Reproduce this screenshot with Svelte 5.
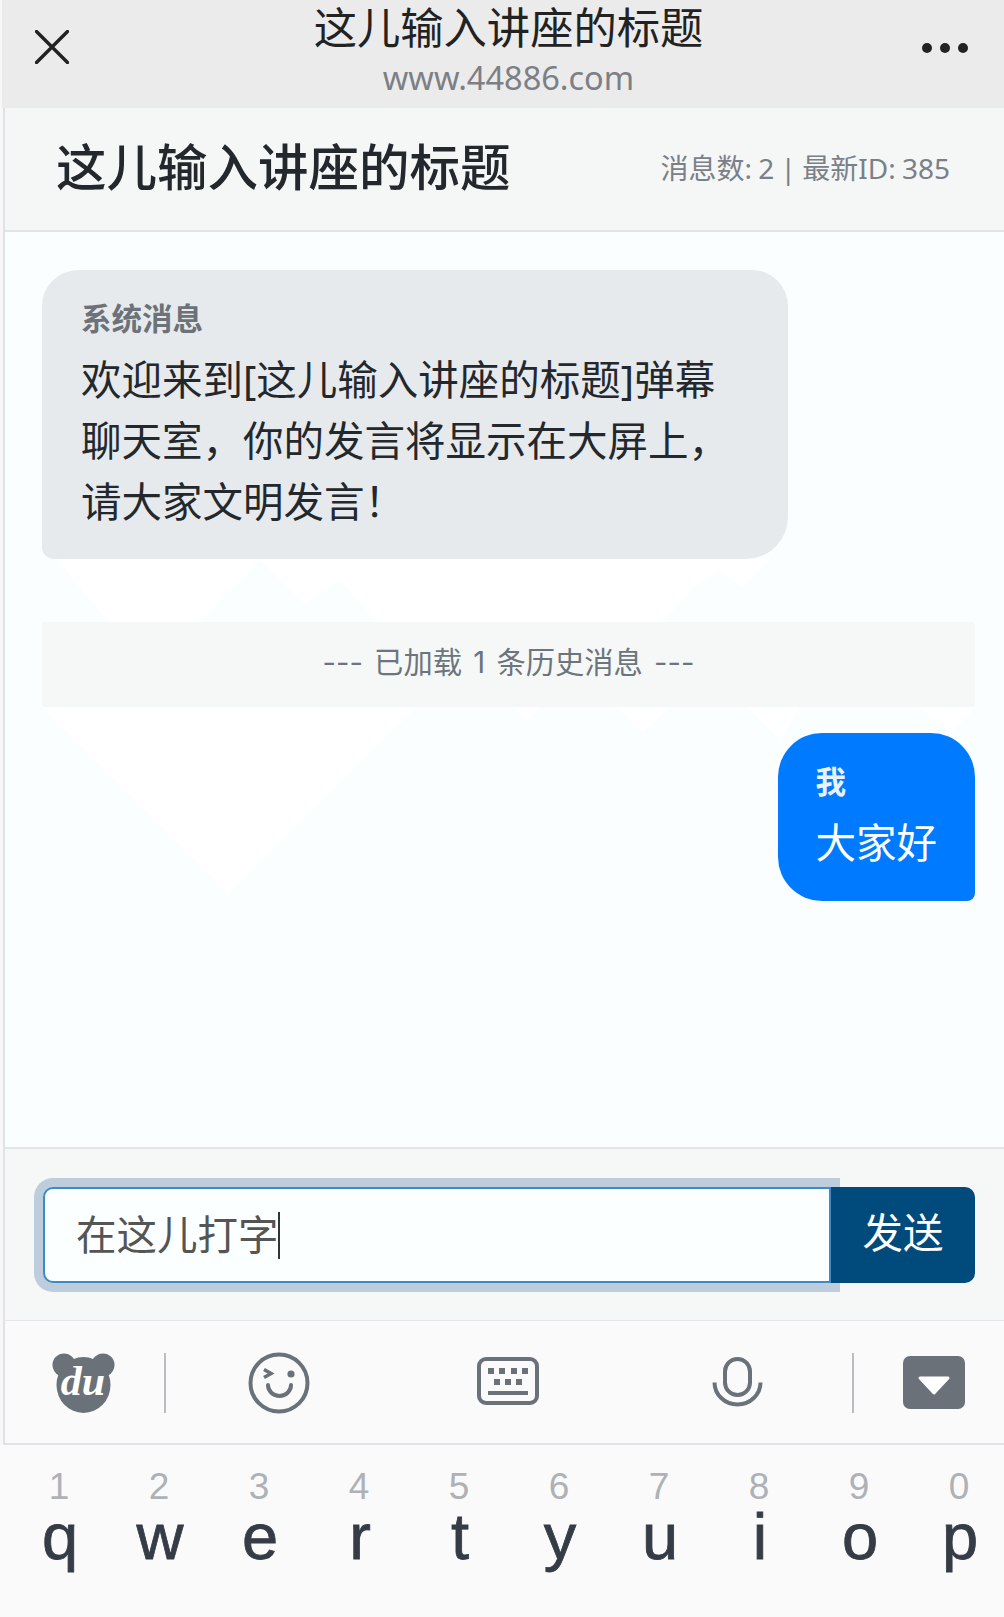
<script>
  const keys = [['1','q'],['2','w'],['3','e'],['4','r'],['5','t'],['6','y'],['7','u'],['8','i'],['9','o'],['0','p']];
</script>

<div class="screen">
  <div class="topbar">
    <svg class="close" viewBox="0 0 34 34" width="34" height="34"><path d="M1.5 1.5 32.5 32.5M32.5 1.5 1.5 32.5" fill="none" stroke="#222" stroke-width="3.4" stroke-linecap="round"/></svg>
    <div class="topcenter">
      <div class="toptitle">这儿输入讲座的标题</div>
      <div class="url">www.44886.com</div>
    </div>
    <div class="dots"><i></i><i></i><i></i></div>
  </div>

  <div class="panel">
    <div class="header">
      <div class="title">这儿输入讲座的标题</div>
      <div class="meta">消息数: 2 | 最新ID: 385</div>
    </div>

    <div class="messages">
      <svg class="pattern" viewBox="5 232 999 913" width="999" height="913" aria-hidden="true">
        <polygon points="57,559 108,622 200,622 230,588 235,588 260,560 305,604 340,580 377,622 663,622 692,588 720,570 742,587 770,559" fill="#fff"/>
        <polygon points="42,707 228,893 416,707" fill="#fff"/>
        <polygon points="513,707 527,720 540,707" fill="#fff"/>
        <polygon points="617,707 643,732 670,707" fill="#fff"/>
        <polygon points="747,707 780,740 800,707" fill="#fff"/>
        <polygon points="950,733 976,707 920,707" fill="#fff"/>
      </svg>
      <div class="bubble system">
        <div class="who">系统消息</div>
        <div class="text">欢迎来到[这儿输入讲座的标题]弹幕聊天室，你的发言将显示在大屏上，请大家文明发言！</div>
      </div>
      <div class="notice">--- 已加载 1 条历史消息 ---</div>
      <div class="bubble mine">
        <div class="who">我</div>
        <div class="text">大家好</div>
      </div>
    </div>

    <div class="inputbar">
      <div class="inputbox"><span class="typed">在这儿打字</span><i class="caret"></i></div>
      <div class="send">发送</div>
    </div>

    <div class="toolbar">
      <svg class="bear" viewBox="0 0 63 60" width="63" height="60">
        <circle cx="12" cy="12" r="11.5" fill="#6b7178"/>
        <circle cx="51" cy="12" r="11.5" fill="#6b7178"/>
        <ellipse cx="31.5" cy="32" rx="27" ry="28" fill="#6b7178"/>
        <text x="31" y="42" text-anchor="middle" class="du">du</text>
      </svg>
      <i class="sep first"></i>
      <svg class="smile" viewBox="0 0 62 62" width="62" height="62" fill="none" stroke="#6b7178" stroke-width="4">
        <circle cx="31" cy="31" r="28.5"/>
        <path d="M16 17.500 23 21.500 16 25.500" stroke-width="3.6"/>
        <circle cx="43" cy="22" r="3.6" fill="#6b7178" stroke="none"/>
        <path d="M20 33a11.500 11 0 0 0 23 0" stroke-linecap="round"/>
      </svg>
      <svg class="kbd" viewBox="0 0 62 48" width="62" height="48">
        <rect x="2" y="2" width="58" height="44" rx="7" fill="none" stroke="#6b7178" stroke-width="4"/>
        <g fill="#6b7178">
          <rect x="11" y="11" width="6" height="6"/><rect x="22" y="11" width="6" height="6"/><rect x="34" y="11" width="6" height="6"/><rect x="45" y="11" width="6" height="6"/>
          <rect x="17" y="22" width="6" height="6"/><rect x="28" y="22" width="6" height="6"/><rect x="39" y="22" width="6" height="6"/>
          <rect x="11" y="34" width="40" height="4"/>
        </g>
      </svg>
      <svg class="mic" viewBox="0 0 51 50" width="51" height="50" fill="none" stroke="#6b7178" stroke-width="4">
        <rect x="13" y="2" width="25" height="36" rx="12.5"/>
        <path d="M2.500 25.500a23 22 0 0 0 46 0"/>
      </svg>
      <i class="sep second"></i>
      <svg class="down" viewBox="0 0 62 53" width="62" height="53">
        <rect width="62" height="53" rx="7" fill="#6b7178"/>
        <path d="M17 22H45L31 37Z" fill="#fff" stroke="#fff" stroke-width="3" stroke-linejoin="round"/>
      </svg>
    </div>
  </div>

  <div class="keyboard">
    {#each keys as k}
      <div class="key"><span class="digit">{k[0]}</span><span class="letter">{k[1]}</span></div>
    {/each}
  </div>
</div>

<style>
  :global(body) { margin: 0; background: #f7f7f7; }
  .screen {
    width: 1004px; height: 1617px; overflow: hidden;
    display: flex; flex-direction: column; background: #f7f7f7;
    font-family: "Noto Sans", "Noto Sans CJK SC", sans-serif;
  }
  .topbar {
    height: 108px; flex: none; box-sizing: border-box; margin-left: 2px;
    background: #ebebeb; padding: 0 22px 0 33px;
    display: grid; grid-template-columns: 1fr auto 1fr; align-items: center;
  }
  .close { display: block; margin-top: -14px; }
  .topcenter { text-align: center; align-self: start; padding-top: 6px; }
  .toptitle { font-size: 43.3px; line-height: 44px; color: #222; }
  .url { font-size: 32.5px; line-height: 48px; color: #7b8086; margin-top: 4px; }
  .dots { justify-self: end; display: flex; gap: 8px; margin-right: 14px; margin-top: -12px; }
  .dots i { width: 10px; height: 10px; border-radius: 50%; background: #222; }

  .panel {
    flex: none; height: 1337px; margin-left: 3px; border-left: 2px solid #e0e3e6;
    display: flex; flex-direction: column;
  }
  .header {
    height: 124px; flex: none; box-sizing: border-box;
    background: #f5f6f6; border-bottom: 2px solid #e2e4e6;
    padding: 0 54px 4px 51px;
    display: flex; justify-content: space-between; align-items: center;
  }
  .title { font-size: 50.5px; line-height: 70px; color: #23282d; font-weight: 500; }
  .meta { font-size: 28px; line-height: 40px; color: #7a8087; word-spacing: -1px; margin-top: 1px; }

  .messages {
    flex: 1; position: relative; overflow: hidden; background: #fafeff;
    padding: 38px 29px 0 37px; box-sizing: border-box;
    display: flex; flex-direction: column;
  }
  .pattern { position: absolute; left: 0; top: 0; }
  .bubble { position: relative; box-sizing: border-box; padding: 26px 38px; }
  .who { font-size: 30.5px; line-height: 44px; font-weight: 700; margin-bottom: 9px; }
  .text { font-size: 40.5px; line-height: 61px; }
  .system {
    width: 746px; align-self: flex-start; background: #e6eaed; color: #23282d;
    padding-left: 40px; padding-right: 40px; padding-bottom: 27px;
    border-radius: 36px 36px 42px 12px;
  }
  .system .who { color: #6c7278; margin-left: -1px; }
  .system .text { margin-left: -1px; }
  .notice {
    position: relative; margin-top: 63px; height: 85px;
    background: #f6f8f8; border-radius: 3px;
    font-family: Inter, "Noto Sans CJK SC", sans-serif;
    font-size: 29.3px; line-height: 82px; text-align: center; color: #6c757d;
    word-spacing: 3px;
  }
  .mine {
    align-self: flex-end; margin-top: 26px; background: #007bff; color: #fff;
    padding-bottom: 28px;
    border-radius: 44px 44px 8px 44px;
  }
  .mine .who { color: #e8f3ff; }

  .inputbar {
    height: 174px; flex: none; box-sizing: border-box;
    background: #f6f8f8; border-top: 2px solid #e2e4e6; border-bottom: 1px solid #e4e7e9;
    padding: 38px 29px 0 38px; display: flex; align-items: flex-start;
  }
  .inputbox {
    flex: 1; height: 96px; box-sizing: border-box;
    background: #fbffff; border: 2px solid #3d8ac6; border-radius: 10px 0 0 10px;
    box-shadow: 0 0 0 9px #bdcddb; padding: 0 0 0 31px;
    display: flex; align-items: center;
    font-size: 40.5px; color: #555;
  }
  .typed { margin-top: -6px; }
  .caret { width: 2px; height: 47px; background: #333; margin-left: -1px; }
  .send {
    position: relative; width: 144px; height: 96px; flex: none;
    background: #004a7c; color: #fff; border-radius: 0 10px 10px 0;
    font-size: 40.5px; line-height: 92px; text-align: center;
  }

  .toolbar {
    height: 124px; flex: none; box-sizing: border-box; background: #fafafa;
    border-bottom: 2px solid #dfe2e5; padding: 32px 0 0 47px;
    display: flex; align-items: flex-start;
  }
  .toolbar svg { display: block; flex: none; }
  .du { font: italic 700 42px "Liberation Serif", serif; fill: #fff; }
  .sep { display: block; width: 2px; height: 60px; background: #b9bdc1; flex: none; }
  .sep.first { margin-left: 49px; }
  .smile { margin-left: 82px; margin-top: -1px; }
  .kbd { margin-left: 167px; margin-top: 4px; }
  .mic { margin-left: 173px; margin-top: 4px; }
  .sep.second { margin-left: 89px; }
  .down { margin-left: 49px; margin-top: 3px; }

  .keyboard {
    flex: 1; background: #fafafa; padding: 0 0 0 9px;
    display: flex; align-items: flex-start;
  }
  .key {
    width: 100px; flex: none; display: flex; flex-direction: column; align-items: center;
    font-family: "Liberation Sans", Arial, sans-serif;
  }
  .digit { font-size: 37px; line-height: 34px; margin-top: 25px; color: #aeb2b6; }
  .letter { font-size: 65px; line-height: 66px; margin-top: 0; margin-left: 2px; color: #363c46; -webkit-text-stroke: 0.8px #363c46; }
</style>
